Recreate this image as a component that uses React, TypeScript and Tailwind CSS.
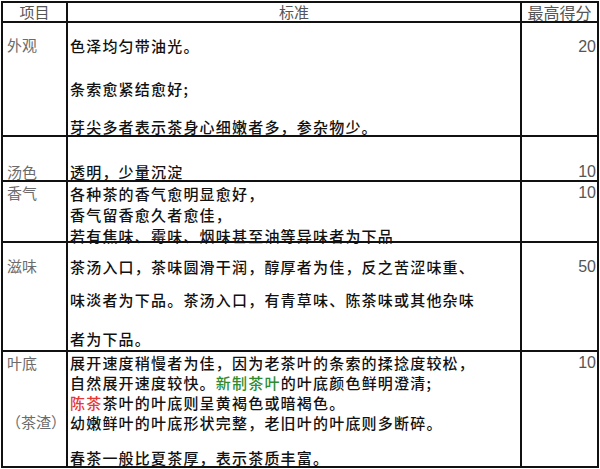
import React from "react";

const cjk = { fontFamily: '"Noto Sans CJK SC", "Noto Sans", sans-serif' };
const num = { fontFamily: '"Liberation Sans", Arial, sans-serif' };

function Row({
  h,
  label,
  score,
  labelPt,
  scorePt,
  children,
  extraLabel,
}: {
  h: number;
  label: string;
  score: string;
  labelPt: number;
  scorePt: number;
  children: React.ReactNode;
  extraLabel?: React.ReactNode;
}) {
  return (
    <div className="flex border-b-2 border-[#111]" style={{ height: h + 2 }}>
      <div className="w-[65px] shrink-0 border-r-2 border-[#111] flex flex-col">
        <div
          className="text-[15px] leading-[20px] text-[#6b6b6b] pl-[4px]"
          style={{ ...cjk, paddingTop: labelPt }}
        >
          {label}
        </div>
        {extraLabel}
      </div>
      <div
        className="w-[454px] shrink-0 border-r-2 border-[#111] pl-[2px] flex flex-col text-[15px] tracking-[1.2px] font-medium text-[#111]"
        style={cjk}
      >
        {children}
      </div>
      <div
        className="flex-1 text-right pr-[1px] text-[16px] leading-[20px] text-[#555]"
        style={{ ...num, paddingTop: scorePt }}
      >
        {score}
      </div>
    </div>
  );
}

export default function App() {
  return (
    <div className="w-[600px] h-[469px] bg-white overflow-hidden pl-[1px] pt-[1px]">
      <div className="w-[598px] border-l-2 border-t-2 border-r-2 border-[#111]">
        <div className="flex border-b-2 border-[#111] h-[20px] text-[#555]" style={cjk}>
          <div className="w-[65px] shrink-0 border-r-2 border-[#111] text-center text-[15px] leading-[18px]">
            项目
          </div>
          <div className="w-[454px] shrink-0 border-r-2 border-[#111] text-center text-[15px] leading-[18px]">
            标准
          </div>
          <div className="flex-1 text-center text-[16px] leading-[18px] whitespace-nowrap">最高得分</div>
        </div>

        <Row h={112} label="外观" score="20" labelPt={12} scorePt={14}>
          <div className="leading-[20px] mt-[13px]">色泽均匀带油光。</div>
          <div className="leading-[20px] mt-[23px]">条索愈紧结愈好;</div>
          <div className="leading-[20px] mt-[18px]">芽尖多者表示茶身心细嫩者多，参杂物少。</div>
        </Row>

        <Row h={43} label="汤色" score="10" labelPt={25} scorePt={25}>
          <div className="leading-[20px] mt-[25px]">透明，少量沉淀</div>
        </Row>

        <Row h={59} label="香气" score="10" labelPt={1} scorePt={1}>
          <div className="leading-[21px] mt-[1px]">各种茶的香气愈明显愈好，</div>
          <div className="leading-[21px]">香气留香愈久者愈佳，</div>
          <div className="leading-[21px]">若有焦味、霉味、烟味甚至油等异味者为下品</div>
        </Row>

        <Row h={107} label="滋味" score="50" labelPt={13} scorePt={14}>
          <div className="leading-[20px] mt-[14px]">茶汤入口，茶味圆滑干润，醇厚者为佳，反之苦涩味重、</div>
          <div className="leading-[20px] mt-[13px]">味淡者为下品。茶汤入口，有青草味、陈茶味或其他杂味</div>
          <div className="leading-[20px] mt-[19px]">者为下品。</div>
        </Row>

        <Row
          h={114}
          label="叶底"
          score="10"
          labelPt={1}
          scorePt={1}
          extraLabel={
            <div className="text-[15px] leading-[20px] text-[#6b6b6b] text-right mt-[39px] pr-[0px]" style={cjk}>
              （茶渣）
            </div>
          }
        >
          <div className="leading-[20px] mt-[1px]">展开速度稍慢者为佳，因为老茶叶的条索的揉捻度较松，</div>
          <div className="leading-[20px]">
            自然展开速度较快。<span className="text-[#2e8b2e]">新制茶叶</span>的叶底颜色鲜明澄清;
          </div>
          <div className="leading-[20px]">
            <span className="text-[#e53935]">陈茶</span>茶叶的叶底则呈黄褐色或暗褐色。
          </div>
          <div className="leading-[20px]">幼嫩鲜叶的叶底形状完整，老旧叶的叶底则多断碎。</div>
          <div className="leading-[20px] mt-[15px]">春茶一般比夏茶厚，表示茶质丰富。</div>
        </Row>
      </div>
    </div>
  );
}
